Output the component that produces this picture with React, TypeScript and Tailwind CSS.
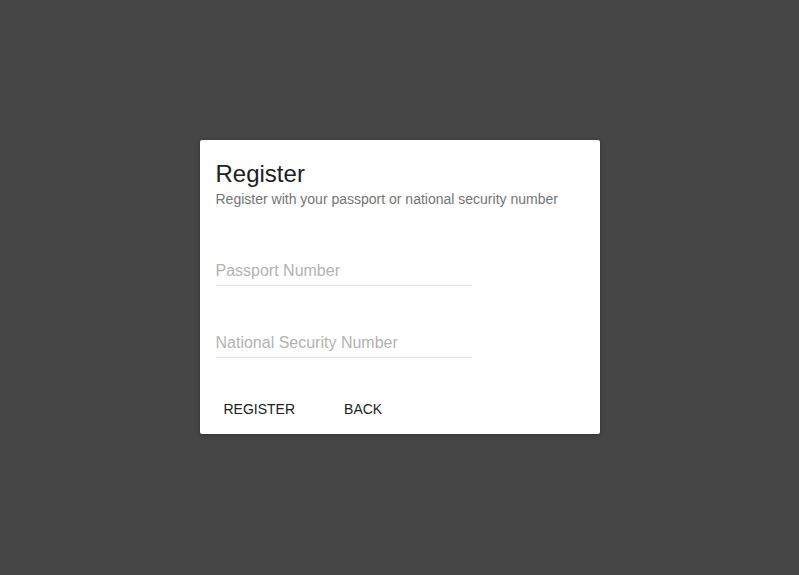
export default function App() {
    return (
        <div className="flex h-screen w-full items-center justify-center bg-[#464646] pb-px font-['Liberation_Sans',Arial,sans-serif]">
            <div className="flex w-[400px] flex-col rounded-[2px] bg-white shadow-[0_1px_6px_rgba(0,0,0,0.12),0_1px_4px_rgba(0,0,0,0.12)]">
                <div className="px-4 pt-[18px]">
                    <h2 className="text-[24px] leading-[31px] text-[#212121]">Register</h2>
                    <p className="text-[14px] leading-[20px] text-[#757575]">
                        Register with your passport or national security number
                    </p>
                </div>

                <div className="mt-[5px] flex flex-col px-4">
                    <Field placeholder="Passport Number" />
                    <Field placeholder="National Security Number" />
                </div>

                <div className="mt-[25px] flex px-2 pt-2 pb-[7px]">
                    <button className="h-9 min-w-[88px] cursor-pointer rounded-[2px] px-4 text-[14px] text-[#212121] hover:bg-black/5">
                        REGISTER
                    </button>
                    <button className="ml-[17px] h-9 min-w-[88px] cursor-pointer rounded-[2px] px-4 text-left text-[14px] text-[#212121] hover:bg-black/5">
                        BACK
                    </button>
                </div>
            </div>
        </div>
    );
}

function Field({ placeholder }: { placeholder: string }) {
    return (
        <div className="flex h-[72px] w-[256px] flex-col justify-end">
            <input
                placeholder={placeholder}
                className="w-full border-b border-[#e0e0e0] bg-transparent pb-[2px] text-[16px] leading-6 text-[#212121] outline-none placeholder:text-[#b3b3b3]"
            />
        </div>
    );
}
